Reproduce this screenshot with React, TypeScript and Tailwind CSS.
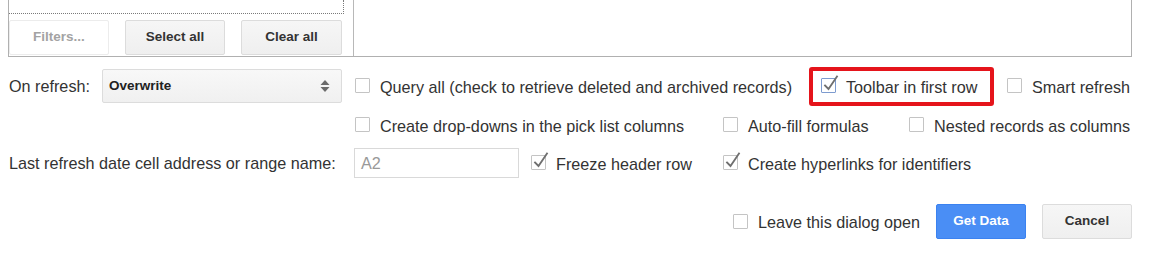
import React from "react"

const font = { fontFamily: '"Liberation Sans", Arial, sans-serif' }

function Box({ checked = false, focus = false }: { checked?: boolean; focus?: boolean }) {
  return (
    <span
      className={`relative inline-block h-[15px] w-[15px] shrink-0 rounded-[1px] border bg-white ${
        focus ? "border-[#7d9bcf]" : "border-[#c4c4c4]"
      }`}
    >
      {checked && (
        <svg className="absolute left-[1px] top-[-4px]" width="16" height="17" viewBox="0 0 16 17" fill="none">
          <path d="M2 10.5 L5.5 14 L14 1.5" stroke="#6f6f6f" strokeWidth="1.8" strokeLinecap="square" />
        </svg>
      )}
    </span>
  )
}

function Check({
  label,
  checked = false,
  focus = false,
  className = "",
}: {
  label: string
  checked?: boolean
  focus?: boolean
  className?: string
}) {
  return (
    <label className={`flex items-center gap-[10px] whitespace-nowrap text-[16.2px] text-[#333] ${className}`}>
      <Box checked={checked} focus={focus} />
      <span className="pt-[2px]">{label}</span>
    </label>
  )
}

export default function App() {
  return (
    <div className="h-[271px] w-[1157px] overflow-hidden bg-white" style={font}>
      {/* list panels */}
      <div className="ml-[8px] flex h-[57px] w-[1124px] border-x border-b border-[#b0b0b0]">
        <div className="flex w-[335px] flex-col">
          <div className="h-[14px] border-b border-r border-dotted border-[#7a7a7a]" />
          <div className="mt-[6px] flex gap-[16px]">
            <button className="h-[35px] w-[100px] rounded-[2px] border border-[#ececec] bg-white text-[13.5px] font-bold text-[#a3a3a3]">
              Filters...
            </button>
            <button className="h-[35px] w-[100px] rounded-[2px] border border-[#dcdcdc] bg-gradient-to-b from-[#f6f6f6] to-[#efefef] text-[13.5px] font-bold text-[#333]">
              Select all
            </button>
            <button className="h-[35px] w-[101px] rounded-[2px] border border-[#dcdcdc] bg-gradient-to-b from-[#f6f6f6] to-[#efefef] text-[13.5px] font-bold text-[#333]">
              Clear all
            </button>
          </div>
        </div>
        <div className="ml-[9px] flex-1 border-l border-[#b8b8b8]" />
      </div>

      {/* row 1 */}
      <div className="mt-[9px] flex h-[40px] items-center pl-[9px]">
        <span className="w-[93px] text-[16.2px] text-[#333]">On refresh:</span>
        <div className="flex h-[34px] w-[240px] items-center justify-between rounded-[2px] border border-[#dcdcdc] bg-gradient-to-b from-[#f8f8f8] to-[#f0f0f0] pl-[6px] pr-[11px]">
          <span className="text-[13.5px] font-bold text-[#222]">Overwrite</span>
          <svg width="10" height="14" viewBox="0 0 10 14">
            <path d="M5 1 L9.5 6 L0.5 6 Z" fill="#6b6b6b" />
            <path d="M0.5 8 L9.5 8 L5 13 Z" fill="#6b6b6b" />
          </svg>
        </div>
        <Check className="ml-[13px] w-[454px]" label="Query all (check to retrieve deleted and archived records)" />
        <div className="flex h-[39px] w-[185px] items-center rounded-[3px] border-[4px] border-[#e5141b] pl-[8px]">
          <Check checked focus label="Toolbar in first row" />
        </div>
        <Check className="ml-[13px]" label="Smart refresh" />
      </div>

      {/* row 2 */}
      <div className="flex h-[38px] items-center pl-[355px]">
        <Check className="w-[368px]" label="Create drop-downs in the pick list columns" />
        <Check className="w-[186px]" label="Auto-fill formulas" />
        <Check label="Nested records as columns" />
      </div>

      {/* row 3 */}
      <div className="flex h-[38px] items-center pl-[9px]">
        <span className="w-[345px] text-[16.2px] text-[#333]">Last refresh date cell address or range name:</span>
        <div className="flex h-[30px] w-[165px] items-center border border-[#d9d9d9] bg-white pl-[6px] text-[16.2px] text-[#999]">
          A2
        </div>
        <Check checked className="ml-[12px] w-[192px]" label="Freeze header row" />
        <Check checked label="Create hyperlinks for identifiers" />
      </div>

      {/* actions */}
      <div className="mt-[22px] flex h-[35px] items-center justify-end pr-[25px]">
        <Check label="Leave this dialog open" />
        <button className="ml-[16px] h-[35px] w-[90px] rounded-[2px] border border-[#3b82f0] bg-[#4a8ef5] text-[13.5px] font-bold text-white">
          Get Data
        </button>
        <button className="ml-[16px] h-[35px] w-[90px] rounded-[2px] border border-[#dcdcdc] bg-gradient-to-b from-[#f6f6f6] to-[#efefef] text-[13.5px] font-bold text-[#333]">
          Cancel
        </button>
      </div>
    </div>
  )
}
